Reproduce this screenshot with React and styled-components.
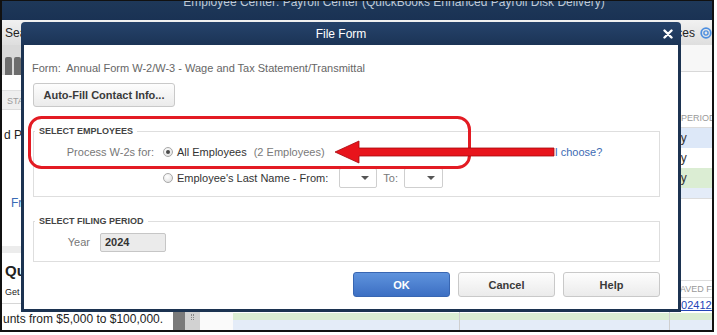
import React from 'react';
import styled, { createGlobalStyle } from 'styled-components';

const GlobalStyle = createGlobalStyle`
  html, body { margin: 0; padding: 0; background: #fff; }
  body { font-family: "Liberation Sans", Arial, sans-serif; }
  * { box-sizing: border-box; }
`;

const Screen = styled.div`
  position: relative;
  width: 714px;
  height: 332px;
  border: 2px solid #111;
  border-top-width: 1px;
  overflow: hidden;
  background: #fff;
`;

/* ---------- background app window ---------- */

const AppWindow = styled.div`
  display: flex;
  flex-direction: column;
  height: 100%;
`;

const AppTitle = styled.div`
  height: 19px;
  flex: none;
  background: linear-gradient(#1e3859, #1a3254);
  color: #bfc9d6;
  font-size: 12px;
  line-height: 3px;
  text-align: center;
  padding-left: 74px;
  white-space: nowrap;
`;

const Toolbar = styled.div`
  height: 25px;
  flex: none;
  display: flex;
  align-items: center;
  justify-content: space-between;
  padding-left: 3px;
  background: linear-gradient(#f1f1f1, #dedede);
  font-size: 12px;
  color: #222;
`;

const ToolRight = styled.div`
  display: flex;
  align-items: center;
  gap: 5px;
`;

const AppBody = styled.div`
  flex: 1;
  display: grid;
  grid-template-columns: 171px 12px 15px 33px 1fr;
  min-height: 0;
`;

const LeftPanel = styled.div`
  display: flex;
  flex-direction: column;
  font-size: 12px;
  color: #222;
  white-space: nowrap;
  overflow: hidden;
`;

const TabStrip = styled.div`
  height: 30px;
  display: flex;
  align-items: flex-end;
  gap: 2px;
  padding-left: 3px;
  background: #d9d9d9;
  margin-bottom: 15px;
`;

const Tab = styled.div`
  width: 7px;
  height: 18px;
  background: #6d6d6d;
  border-radius: 2px 2px 0 0;
`;

const HeadRow = styled.div`
  height: 20px;
  line-height: 20px;
  padding-left: 5px;
  background: #efefef;
  border-top: 1px solid #e0e0e0;
  border-bottom: 1px solid #dcdcdc;
  font-size: 9px;
  color: #9a9a9a;
`;

const PanelRow = styled.div`
  height: ${p => p.$h}px;
  flex: none;
  display: flex;
  align-items: ${p => p.$align || 'center'};
  padding-top: ${p => p.$pt ?? 0}px;
  padding-left: ${p => p.$pl ?? 3}px;
  color: ${p => p.$color || '#222'};
  font-size: ${p => p.$size || 12}px;
  font-weight: ${p => p.$bold ? 700 : 400};
  background: ${p => p.$bg || 'transparent'};
  border-bottom: ${p => p.$line ? '1px solid #d6d6d6' : 'none'};
`;

const Splitter = styled.div`
  background: #7a7a7a;
`;

const ScrollTrack = styled.div`
  background: #d2d2d2;
  display: flex;
  flex-direction: column;
  justify-content: flex-end;
  align-items: center;
  padding-bottom: 10px;
`;

const Grip = styled.div`
  width: 3px;
  height: 6px;
  border-left: 1px dotted #888;
  border-right: 1px dotted #888;
`;

const Gutter = styled.div`
  background: #fafafa;
`;

const MainPanel = styled.div`
  display: flex;
  flex-direction: column;
  overflow: hidden;
  white-space: nowrap;
`;

const TopStrip = styled.div`
  height: 27px;
  flex: none;
  background: #f7f7f7;
  border-bottom: 1px solid #d8d8d8;
  margin-bottom: 36px;
`;

const Table = styled.div`
  display: grid;
  grid-template-columns: ${p => p.$cols};
  flex: none;
  border-top: ${p => p.$topLine ? '1px solid #dcdcdc' : 'none'};
  margin-bottom: ${p => p.$mb || 0}px;
`;

const HeadCell = styled.div`
  height: ${p => p.$h || 20}px;
  line-height: ${p => p.$h || 20}px;
  font-size: 9px;
  color: #9a9a9a;
  text-transform: uppercase;
  padding-left: ${p => p.$pl || 0}px;
  border-bottom: 1px solid #dcdcdc;
`;

const Cell = styled.div`
  height: ${p => p.$h || 20}px;
  line-height: ${p => p.$h || 20}px;
  font-size: ${p => p.$size || 12}px;
  color: #333;
  overflow: hidden;
  padding-left: ${p => p.$pl || 0}px;
  background: ${p => p.$bg || '#fff'};
  border-left: ${p => p.$divider ? '1px solid #cfcfcf' : 'none'};
`;

const RowLink = styled.a`
  color: #2445b8;
  text-decoration: underline;
`;

/* ---------- dialog ---------- */

const Dialog = styled.div`
  position: absolute;
  left: 19px;
  top: 21px;
  width: 660px;
  height: 290px;
  display: flex;
  flex-direction: column;
  font-size: 11px;
`;

const DialogTitle = styled.div`
  height: 23px;
  flex: none;
  display: flex;
  align-items: center;
  background: linear-gradient(#26436b, #1b3456);
  border-radius: 4px 4px 0 0;
  color: #fff;
  font-size: 12px;
`;

const TitleText = styled.div`
  flex: 1;
  text-align: center;
  padding-left: 3px;
`;

const CloseButton = styled.div`
  width: 20px;
  margin-right: 3px;
  display: flex;
  justify-content: center;
  align-items: center;
`;

const DialogBody = styled.div`
  flex: 1;
  background: #fff;
  border: 3px solid #1c3351;
  border-top: none;
  padding: 16px 18px 0 8px;
  display: flex;
  flex-direction: column;
  align-items: stretch;
`;

const FormLine = styled.div`
  line-height: 14px;
  color: #666;
  white-space: pre;
`;

const Button = styled.button`
  font-family: inherit;
  font-size: 11px;
  font-weight: 700;
  width: ${p => p.$w || 97}px;
  height: ${p => p.$h || 25}px;
  border-radius: 3px;
  cursor: default;
  color: ${p => p.$primary ? '#fff' : '#3a3a3a'};
  background: ${p => p.$primary
    ? 'linear-gradient(#5f93dd, #3c6fc3)'
    : 'linear-gradient(#fdfdfd, #ebebeb)'};
  border: 1px solid ${p => p.$primary ? '#3866b2' : '#c9c9c9'};
  padding: 0;
`;

const AutoFill = styled(Button)`
  margin-top: 8px;
  margin-left: 1px;
  align-self: flex-start;
`;

const Group = styled.fieldset`
  margin: ${p => p.$mt}px 0 0 1px;
  border: 1px solid #dedede;
  padding: 6px 0 ${p => p.$pb}px 0;
  min-width: 0;
  display: flex;
  flex-direction: column;
  gap: 6px;
`;

const Legend = styled.legend`
  font-size: 9px;
  line-height: 10px;
  font-weight: 700;
  color: #444;
  padding: 0 4px;
  margin-left: 1px;
`;

const FieldRow = styled.div`
  height: 20px;
  display: flex;
  align-items: center;
  white-space: nowrap;
`;

const Label = styled.span`
  width: ${p => p.$w}px;
  flex: none;
  text-align: right;
  color: #777;
  font-size: 11px;
  margin-right: ${p => p.$mr ?? 9}px;
`;

const Radio = styled.span`
  width: 10px;
  height: 10px;
  flex: none;
  border-radius: 50%;
  border: 1px solid #a8a8a8;
  background: radial-gradient(circle at 40% 35%, #ffffff, #dcdcdc);
  display: flex;
  align-items: center;
  justify-content: center;
  margin-right: 4px;
  &::after {
    content: '';
    width: 4px;
    height: 4px;
    border-radius: 50%;
    background: ${p => p.$checked ? '#4a4a4a' : 'transparent'};
  }
`;

const Text = styled.span`
  color: ${p => p.$muted ? '#7a7a7a' : '#333'};
  margin-left: ${p => p.$ml || 0}px;
`;

const HelpLink = styled.a`
  color: #3d6bb4;
  margin-left: ${p => p.$ml}px;
`;

const Select = styled.span`
  width: ${p => p.$w}px;
  height: 20px;
  flex: none;
  margin-left: ${p => p.$ml}px;
  border: 1px solid #cfcfcf;
  border-radius: 2px;
  background: #fff;
  display: flex;
  align-items: center;
  justify-content: flex-end;
  padding-right: 7px;
  &::after {
    content: '';
    border-left: 4px solid transparent;
    border-right: 4px solid transparent;
    border-top: 4px solid #555;
  }
`;

const YearInput = styled.span`
  width: 66px;
  height: 19px;
  line-height: 17px;
  margin-left: 10px;
  padding-left: 4px;
  border: 1px solid #c6c6c6;
  border-radius: 2px;
  background: #ebebeb;
  font-weight: 700;
  color: #333;
`;

const ButtonRow = styled.div`
  margin-top: 10px;
  display: flex;
  justify-content: flex-end;
  gap: 8px;
`;

/* ---------- red annotation ---------- */

const Markup = styled.svg`
  position: absolute;
  left: -2px;
  top: -1px;
  width: 717px;
  height: 335px;
  pointer-events: none;
`;

const CloseIcon = () => (
  <svg width="10" height="10" viewBox="0 0 10 10">
    <path d="M1.5 1.5 L8.5 8.5 M8.5 1.5 L1.5 8.5" stroke="#fff" strokeWidth="2.4" strokeLinecap="round" />
  </svg>
);

const SupportIcon = () => (
  <svg width="12" height="12" viewBox="0 0 12 12">
    <circle cx="6" cy="6" r="4.8" fill="none" stroke="#4d8fe0" strokeWidth="1.8" />
    <circle cx="6" cy="6" r="2.1" fill="none" stroke="#4d8fe0" strokeWidth="1.4" />
  </svg>
);

export default function App() {
  return (
    <>
      <GlobalStyle />
      <Screen>
        <AppWindow>
          <AppTitle>Employee Center: Payroll Center (QuickBooks Enhanced Payroll Disk Delivery)</AppTitle>
          <Toolbar>
            <span>Search</span>
            <ToolRight>
              <span>Preferences</span>
              <SupportIcon />
            </ToolRight>
          </Toolbar>
          <AppBody>
            <LeftPanel>
              <TabStrip>
                <Tab />
                <Tab />
              </TabStrip>
              <HeadRow>STATUS</HeadRow>
              <PanelRow $h={50} $pl={2}>d Payroll</PanelRow>
              <PanelRow $h={86} $align="flex-start" $pt={36} $pl={9} $color="#3a6bb5">Free Payroll Tips</PanelRow>
              <PanelRow $h={7} $bg="#ececec" />
              <PanelRow $h={34} $size={15} $bold>QuickBooks Loans</PanelRow>
              <PanelRow $h={17} $size={9} $align="flex-start" $line>Get funding fast</PanelRow>
              <PanelRow $h={22} $pl={1} $align="flex-end">unts from $5,000 to $100,000.</PanelRow>
            </LeftPanel>
            <Splitter />
            <ScrollTrack>
              <Grip />
            </ScrollTrack>
            <Gutter />
            <MainPanel>
              <TopStrip />
              <Table $cols="1fr 52px">
                <HeadCell>Employee</HeadCell>
                <HeadCell $pl={21}>Period</HeadCell>
                <Cell $bg="#dde8f8" />
                <Cell $bg="#dde8f8">Daily</Cell>
                <Cell />
                <Cell>Daily</Cell>
                <Cell $bg="#dbedd3" />
                <Cell $bg="#dbedd3">Daily</Cell>
                <Cell $bg="#e4ecf8" $h={10} />
                <Cell $bg="#e4ecf8" $h={10} />
              </Table>
              <Table $cols="1fr" $topLine $mb={81} />
              <Table $cols="226px 210px 1fr" $topLine>
                <HeadCell $h={17}>Form</HeadCell>
                <HeadCell $h={17}>Status</HeadCell>
                <HeadCell $h={17} $pl={5}>Saved Forms</HeadCell>
                <Cell $h={15} />
                <Cell $h={15} $divider />
                <Cell $h={15} $divider $pl={5} $size={11}><RowLink>20241231</RowLink></Cell>
                <Cell $h={7} $bg="#dbedd3" />
                <Cell $h={7} $bg="#dbedd3" $divider />
                <Cell $h={7} $bg="#dbedd3" $divider />
                <Cell $h={14} $bg="#e4ecf8" />
                <Cell $h={14} $bg="#e4ecf8" $divider />
                <Cell $h={14} $bg="#e4ecf8" $divider />
              </Table>
            </MainPanel>
          </AppBody>
        </AppWindow>

        <Dialog>
          <DialogTitle>
            <TitleText>File Form</TitleText>
            <CloseButton><CloseIcon /></CloseButton>
          </DialogTitle>
          <DialogBody>
            <FormLine>Form:  Annual Form W-2/W-3 - Wage and Tax Statement/Transmittal</FormLine>
            <AutoFill $w={142} $h={24}>Auto-Fill Contact Info...</AutoFill>

            <Group $mt={19} $pb={8}>
              <Legend>SELECT EMPLOYEES</Legend>
              <FieldRow>
                <Label $w={120}>Process W-2s for:</Label>
                <Radio $checked />
                <Text>All Employees</Text>
                <Text $muted $ml={7}>(2 Employees)</Text>
                <HelpLink $ml={230}>I choose?</HelpLink>
              </FieldRow>
              <FieldRow>
                <Label $w={120} />
                <Radio />
                <Text>Employee's Last Name - From:</Text>
                <Select $w={38} $ml={11} />
                <Text $muted $ml={6}>To:</Text>
                <Select $w={39} $ml={6} />
              </FieldRow>
            </Group>

            <Group $mt={19} $pb={9}>
              <Legend>SELECT FILING PERIOD</Legend>
              <FieldRow>
                <Label $w={56} $mr={0}>Year</Label>
                <YearInput>2024</YearInput>
              </FieldRow>
            </Group>

            <ButtonRow>
              <Button $primary>OK</Button>
              <Button>Cancel</Button>
              <Button>Help</Button>
            </ButtonRow>
          </DialogBody>
        </Dialog>

        <Markup viewBox="0 0 717 335">
          <rect x="29.5" y="117.5" width="440" height="50" rx="12" fill="none" stroke="#e31b23" strokeWidth="3" />
          <polygon
            points="335,152 359,141 359,148 554,148 554,156 359,156 359,163"
            fill="#e8141c"
            stroke="#a5080d"
            strokeWidth="0.8"
          />
        </Markup>
      </Screen>
    </>
  );
}
